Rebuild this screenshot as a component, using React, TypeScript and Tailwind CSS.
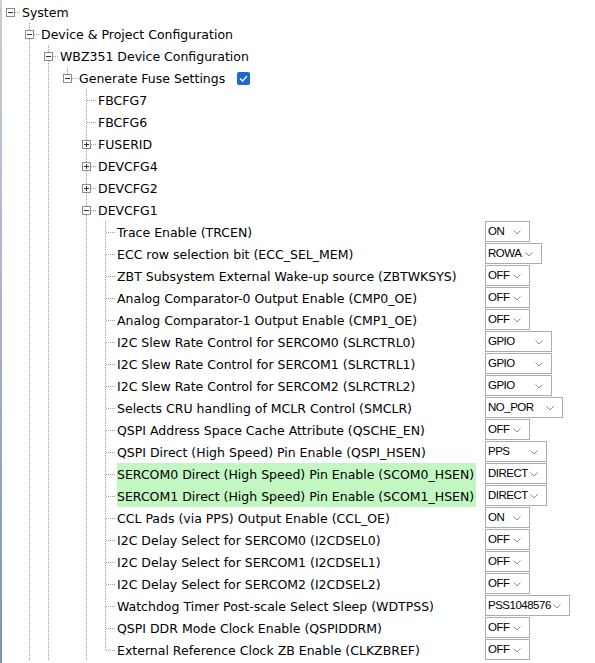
import React from "react";

type Cell = "empty" | "pipe" | "tee" | "ell" | "root";
type Exp = "minus" | "plus" | undefined;

const LINE = "#a0a0a0";

function ConnCell({ kind, exp }: { kind: Cell; exp?: Exp }) {
  return (
    <svg width="19" height="22" className="shrink-0 block" viewBox="0 0 19 22">
      {(kind === "pipe" || kind === "tee") && (
        <line x1="8.5" y1="0" x2="8.5" y2="22" stroke={LINE} strokeWidth="1" strokeDasharray="1 1" />
      )}
      {kind === "ell" && (
        <line x1="8.5" y1="0" x2="8.5" y2="12" stroke={LINE} strokeWidth="1" strokeDasharray="1 1" />
      )}
      {(kind === "tee" || kind === "ell" || kind === "root") && (
        <line x1="9" y1="11.5" x2="19" y2="11.5" stroke={LINE} strokeWidth="1" strokeDasharray="1 1" />
      )}
      {exp && (
        <g>
          <rect x="4.5" y="7.5" width="8" height="8" fill="#ffffff" stroke="#8c8c8c" strokeWidth="1" />
          <line x1="6" y1="11.5" x2="11" y2="11.5" stroke="#333333" strokeWidth="1" />
          {exp === "plus" && <line x1="8.5" y1="9" x2="8.5" y2="14" stroke="#333333" strokeWidth="1" />}
        </g>
      )}
    </svg>
  );
}

function Chevron() {
  return (
    <svg width="8" height="5" viewBox="0 0 8 5" className="block">
      <polyline points="0.5,0.5 4,4 7.5,0.5" fill="none" stroke="#8e8e8e" strokeWidth="1" />
    </svg>
  );
}

function Select({ value, w }: { value: string; w: string }) {
  return (
    <div className={`flex items-center h-[21px] border border-[#adadad] bg-white ${w}`}>
      <span
        className="pl-[2px] text-[11.5px] tracking-[-0.5px] leading-[19px] text-black"
        style={{ fontFamily: '"Liberation Sans", Arial, sans-serif' }}
      >
        {value}
      </span>
      <span className="ml-auto mr-[8px] mt-[1px]">
        <Chevron />
      </span>
    </div>
  );
}

function TreeRow({
  cells,
  exp,
  label,
  highlight,
  extra,
  value,
}: {
  cells: Cell[];
  exp?: Exp;
  label: string;
  highlight?: boolean;
  extra?: React.ReactNode;
  value?: { v: string; w: string };
}) {
  return (
    <div className="flex h-[22px] items-stretch">
      {cells.map((c, i) => (
        <ConnCell key={i} kind={c} exp={i === cells.length - 1 ? exp : undefined} />
      ))}
      <div className="flex-1 flex items-stretch min-w-0">
        <span
          className={`whitespace-nowrap pt-[1px] leading-[21px] ml-[1px] ${highlight ? "bg-[#c2f7c2] pr-[2px]" : ""}`}
        >
          {label}
        </span>
        {extra}
      </div>
      {value && (
        <div className="w-[110px] shrink-0">
          <Select value={value.v} w={value.w} />
        </div>
      )}
    </div>
  );
}

function Check() {
  return (
    <span className="ml-[12px] mt-[5px] w-[13px] h-[13px] rounded-[2px] bg-[#1a6ad1] flex items-center justify-center">
      <svg width="9" height="7" viewBox="0 0 9 7">
        <polyline points="1,3.5 3.5,6 8,1" fill="none" stroke="#ffffff" strokeWidth="1.3" />
      </svg>
    </span>
  );
}

const child: Cell[] = ["empty", "pipe", "pipe", "empty", "pipe", "tee"];
const childLast: Cell[] = ["empty", "pipe", "pipe", "empty", "pipe", "ell"];
const lvl4: Cell[] = ["empty", "pipe", "pipe", "empty", "tee"];

const W44 = "w-[45px]";

const items: { l: string; v: string; w: string; h?: boolean }[] = [
  { l: "Trace Enable (TRCEN)", v: "ON", w: W44 },
  { l: "ECC row selection bit (ECC_SEL_MEM)", v: "ROWA", w: "w-[57px]" },
  { l: "ZBT Subsystem External Wake-up source (ZBTWKSYS)", v: "OFF", w: W44 },
  { l: "Analog Comparator-0 Output Enable (CMP0_OE)", v: "OFF", w: W44 },
  { l: "Analog Comparator-1 Output Enable (CMP1_OE)", v: "OFF", w: W44 },
  { l: "I2C Slew Rate Control for SERCOM0 (SLRCTRL0)", v: "GPIO", w: "w-[67px]" },
  { l: "I2C Slew Rate Control for SERCOM1 (SLRCTRL1)", v: "GPIO", w: "w-[67px]" },
  { l: "I2C Slew Rate Control for SERCOM2 (SLRCTRL2)", v: "GPIO", w: "w-[67px]" },
  { l: "Selects CRU handling of MCLR Control (SMCLR)", v: "NO_POR", w: "w-[78px]" },
  { l: "QSPI Address Space Cache Attribute (QSCHE_EN)", v: "OFF", w: W44 },
  { l: "QSPI Direct (High Speed) Pin Enable (QSPI_HSEN)", v: "PPS", w: "w-[62px]" },
  { l: "SERCOM0 Direct (High Speed) Pin Enable (SCOM0_HSEN)", v: "DIRECT", w: "w-[62px]", h: true },
  { l: "SERCOM1 Direct (High Speed) Pin Enable (SCOM1_HSEN)", v: "DIRECT", w: "w-[62px]", h: true },
  { l: "CCL Pads (via PPS) Output Enable (CCL_OE)", v: "ON", w: W44 },
  { l: "I2C Delay Select for SERCOM0 (I2CDSEL0)", v: "OFF", w: W44 },
  { l: "I2C Delay Select for SERCOM1 (I2CDSEL1)", v: "OFF", w: W44 },
  { l: "I2C Delay Select for SERCOM2 (I2CDSEL2)", v: "OFF", w: W44 },
  { l: "Watchdog Timer Post-scale Select Sleep (WDTPSS)", v: "PSS1048576", w: "w-[85px]" },
  { l: "QSPI DDR Mode Clock Enable (QSPIDDRM)", v: "OFF", w: W44 },
  { l: "External Reference Clock ZB Enable (CLKZBREF)", v: "OFF", w: W44 },
];

export default function App() {
  return (
    <div
      className="w-[595px] h-[663px] overflow-hidden bg-white flex text-black text-[12.5px]"
      style={{ fontFamily: '"DejaVu Sans", Tahoma, Verdana, sans-serif' }}
    >
      <div className="w-[2px] shrink-0 bg-gradient-to-b from-[#c9ced8] to-[#7f93b3]" />
      <div className="flex-1 flex flex-col pt-[1px]">
        <TreeRow cells={["root"]} exp="minus" label="System" />
        <TreeRow cells={["empty", "tee"]} exp="minus" label="Device & Project Configuration" />
        <TreeRow cells={["empty", "pipe", "tee"]} exp="minus" label="WBZ351 Device Configuration" />
        <TreeRow cells={["empty", "pipe", "pipe", "ell"]} exp="minus" label="Generate Fuse Settings" extra={<Check />} />
        <TreeRow cells={lvl4} label="FBCFG7" />
        <TreeRow cells={lvl4} label="FBCFG6" />
        <TreeRow cells={lvl4} exp="plus" label="FUSERID" />
        <TreeRow cells={lvl4} exp="plus" label="DEVCFG4" />
        <TreeRow cells={lvl4} exp="plus" label="DEVCFG2" />
        <TreeRow cells={lvl4} exp="minus" label="DEVCFG1" />
        {items.map((it, i) => (
          <TreeRow
            key={i}
            cells={i === items.length - 1 ? childLast : child}
            label={it.l}
            highlight={it.h}
            value={{ v: it.v, w: it.w }}
          />
        ))}
      </div>
    </div>
  );
}
